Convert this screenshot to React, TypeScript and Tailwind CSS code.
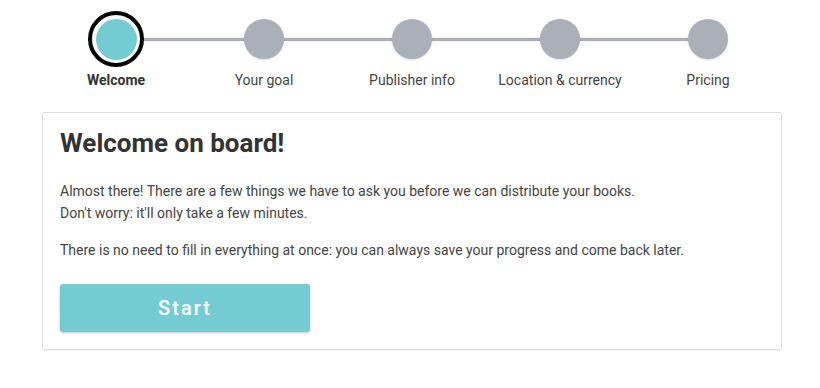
import React from 'react';

const steps = ['Welcome', 'Your goal', 'Publisher info', 'Location & currency', 'Pricing'];

const App: React.FC = () => {
  const current = 0;

  return (
    <div className="min-h-[388px] w-[820px] bg-white font-['Roboto',sans-serif] text-[#444]">
      <div className="ml-[42px] w-[740px] pt-[11px]">
        {/* Stepper */}
        <div className="relative">
          <div className="absolute left-[74px] right-[74px] top-[27px] h-[3px] bg-[#abafb5] shadow-[0_0_2px_rgba(174,178,184,0.6)]" />
          <div className="relative grid grid-cols-5">
            {steps.map((label, i) => (
              <div key={label} className="flex flex-col items-center">
                <div className="flex h-[56px] items-center justify-center">
                  {i === current ? (
                    <div className="flex h-[56px] w-[56px] items-center justify-center rounded-full border-[4px] border-black bg-white">
                      <div className="h-[41px] w-[41px] rounded-full bg-[#74ccd3]" />
                    </div>
                  ) : (
                    <div className="h-[40px] w-[40px] rounded-full bg-[#abb0b8] shadow-[0_1px_2px_rgba(0,0,0,0.15)]" />
                  )}
                </div>
                <span
                  className={
                    i === current
                      ? 'mt-[3px] text-[14px] leading-[20px] font-bold text-[#333]'
                      : 'mt-[3px] text-[14px] leading-[20px] text-[#444]'
                  }
                >
                  {label}
                </span>
              </div>
            ))}
          </div>
        </div>

        {/* Card */}
        <div className="mt-[22px] rounded-[3px] border border-[#dedede] bg-white px-[17px] pt-[14px] pb-[17px] shadow-[0_1px_2px_rgba(0,0,0,0.05)]">
          <h1 className="text-[26px] leading-[32px] font-bold text-[#333]">Welcome on board!</h1>
          <p className="mt-[21px] text-[14px] leading-[22px] text-[#444]">
            Almost there! There are a few things we have to ask you before we can distribute your books.
            <br />
            Don&apos;t worry: it&apos;ll only take a few minutes.
          </p>
          <p className="mt-[15px] text-[14px] leading-[22px] text-[#444]">
            There is no need to fill in everything at once: you can always save your progress and come back later.
          </p>
          <button
            type="button"
            className="mt-[23px] h-[48px] w-[250px] rounded-[3px] bg-[#74ccd3] text-[20px] font-medium tracking-[0.1em] text-white shadow-[0_1px_3px_rgba(0,0,0,0.25)]"
          >
            Start
          </button>
        </div>
      </div>
    </div>
  );
};

export default App;
